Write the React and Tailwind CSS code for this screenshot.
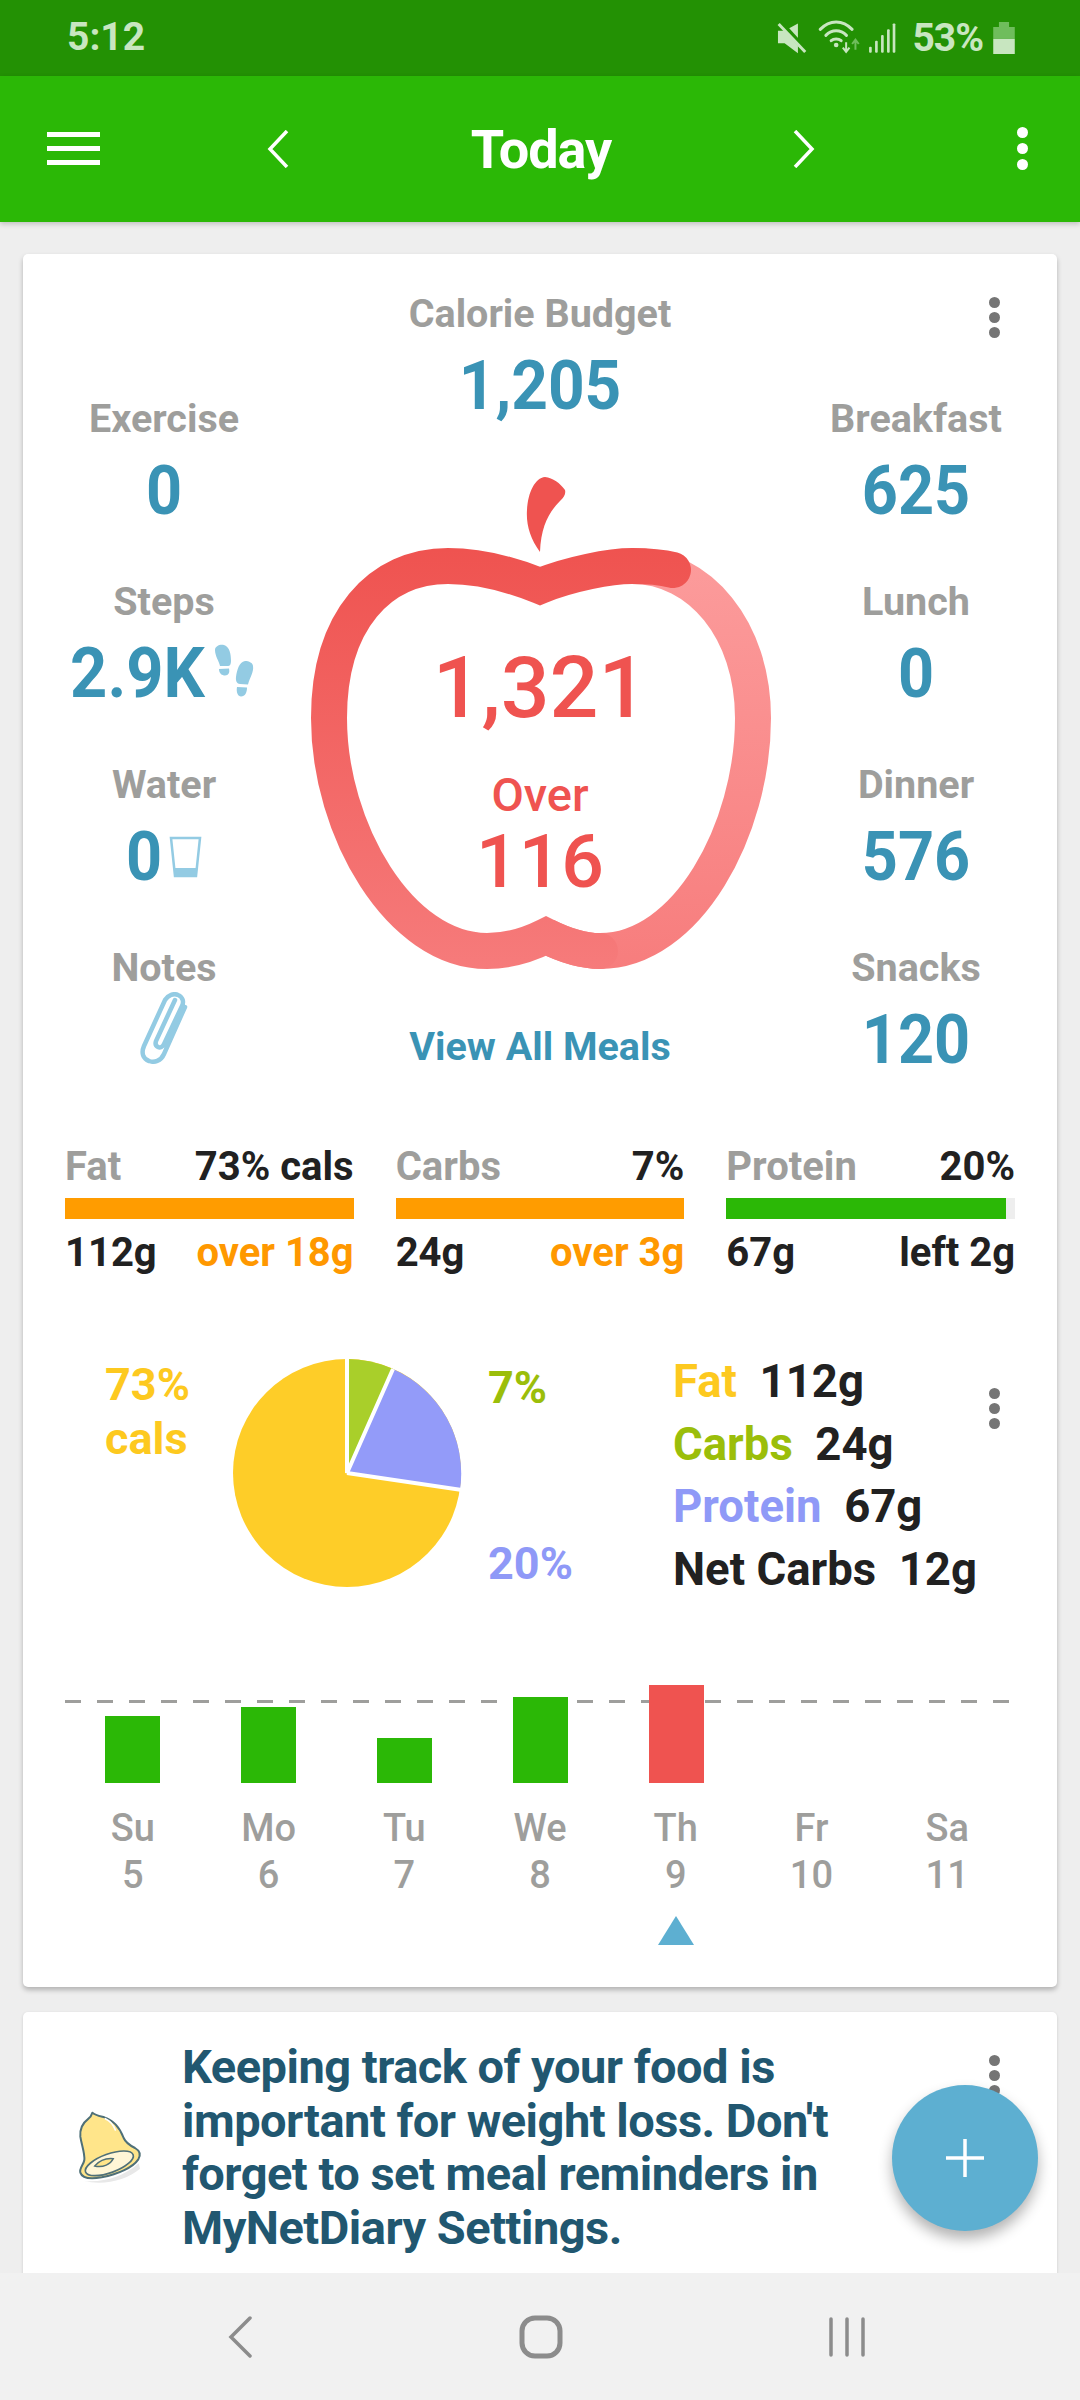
import React from 'react'

const Kebab = ({ className = '' }) => (
  <div className={`flex flex-col gap-[4px] ${className}`}>
    <span className="w-[11px] h-[11px] rounded-full bg-[#757575]" />
    <span className="w-[11px] h-[11px] rounded-full bg-[#757575]" />
    <span className="w-[11px] h-[11px] rounded-full bg-[#757575]" />
  </div>
)

const StatusIcons = () => (
  <svg width="133" height="60" viewBox="0 0 400 180" className="block mt-[4px]">
    {/* mute */}
    <path d="M30 62h20L90 40v90L50 100H30z" fill="#c8e6c0" />
    <path d="M36 36l80 88" stroke="#239104" strokeWidth="16" />
    <path d="M32 42l80 84" stroke="#c8e6c0" strokeWidth="9" />
    {/* wifi */}
    <g fill="none" stroke="#c8e6c0" strokeWidth="9" strokeLinecap="round">
      <path d="M157 58c28-30 68-30 96 0" />
      <path d="M174 76c18-18 44-18 62 0" />
      <path d="M190 92c8-7 22-7 30 0" />
    </g>
    <circle cx="205" cy="105" r="7" fill="#c8e6c0" />
    <path d="M235 97v28m-10-12l10 13 10-13" stroke="#c8e6c0" strokeWidth="6" fill="none" />
    <path d="M263 119V90m-10 12l10-13 10 13" stroke="#6fbd5c" strokeWidth="6" fill="none" />
    {/* signal */}
    <g fill="#c8e6c0">
      <rect x="304" y="110" width="8" height="18" rx="3" />
      <rect x="322" y="92" width="8" height="36" rx="3" />
      <rect x="340" y="75" width="8" height="53" rx="3" />
      <rect x="358" y="58" width="8" height="70" rx="3" />
      <rect x="375" y="40" width="8" height="88" rx="3" />
    </g>
  </svg>
)

const Battery = () => (
  <svg width="22" height="32" viewBox="668 35 64 95" className="block">
    <path d="M685 35h30v15h17v35h-64V50h17z" fill="#6fbd5c" />
    <path d="M668 85h64v45h-64z" fill="#c8e6c0" />
  </svg>
)

const Header = () => (
  <header className="h-[146px] shrink-0 bg-[#2bb806] flex items-center pl-[47px] pr-[52px] relative z-10 shadow-[0_2px_5px_rgba(0,0,0,0.2)]">
    <div className="w-[53px] flex flex-col gap-[9px] -mt-[2px]">
      <span className="h-[5px] bg-white" />
      <span className="h-[5px] bg-white" />
      <span className="h-[5px] bg-white" />
    </div>
    <div className="flex-1 flex items-center justify-between pl-[167px] pr-[202px]">
      <svg width="22" height="38" viewBox="0 0 22 38" fill="none" stroke="white" strokeWidth="3.5"><path d="M20 1L3 19l17 18" /></svg>
      <span className="text-[54px] leading-none font-bold text-white tracking-[-1px] mt-[1px]">Today</span>
      <svg width="22" height="38" viewBox="0 0 22 38" fill="none" stroke="white" strokeWidth="3.5"><path d="M2 1l17 18L2 37" /></svg>
    </div>
    <div className="flex flex-col gap-[5px] -mt-[2px]">
      <span className="w-[11px] h-[11px] rounded-full bg-white" />
      <span className="w-[11px] h-[11px] rounded-full bg-white" />
      <span className="w-[11px] h-[11px] rounded-full bg-white" />
    </div>
  </header>
)

const Stat = ({ label, value, icon, valueClass = 'text-[63px]' }) => (
  <div className="h-[183px] flex flex-col items-center">
    <div className="text-[39.5px] leading-[46px] font-bold text-[#9e9e9c]">{label}</div>
    <div className="flex items-center gap-[7px] h-[80px] mt-[8px]">
      {value && <span className={`${valueClass} leading-none font-bold text-[#3a93b5] scale-y-[1.08]`}>{value}</span>}
      {icon}
    </div>
  </div>
)

const Steps = () => (
  <svg width="44" height="58" viewBox="0 0 44 58" fill="#93cbe3" className="mr-[2px]">
    <path d="M3 6c0-4 5-6 9-5 6 2 7 10 7 16 0 3-1 5-3 5H8C7 17 3 12 3 6z" />
    <path d="M7 25l10-.5c1 4-.5 7-4 7-3 0-6-2-6-6.500z" />
    <path d="M41 22c0-3-4-5-8-5-6 1-8 9-9 16-.5 4 1 7 4 7l8 .5C38 33 42 28 41 22z" />
    <path d="M25 43l10 .5c0 5-2 9-6 9-3 0-5-4-4-9.500z" />
  </svg>
)

const Glass = () => (
  <svg width="33" height="42" viewBox="0 0 33 42" className="mt-[2px]">
    <path d="M2 2h29l-4 38H6z" fill="none" stroke="#93cbe3" strokeWidth="2.500" />
    <path d="M5 32h23l-1 8H6z" fill="#93cbe3" />
  </svg>
)

const Clip = () => (
  <svg width="48" height="72" viewBox="0 0 48 72" fill="none" stroke="#93cbe3" strokeWidth="4.500" strokeLinecap="round" className="-translate-y-[11px]">
    <path d="M45 15L24 62c-3 7-10 9-15 7-6-2-8-8-5-15L25 8c3-5 9-7 13-5 5 2 6 7 4 11L24 52c-1 3-4 4-6 3s-3-3-2-6l19-41" />
  </svg>
)

const Bell = () => (
  <svg width="100" height="110" viewBox="0 0 300 330" className="shrink-0 mt-[50px]">
    <path d="M70 272c50 8 120-10 166-52l4 16c-40 34-110 52-170 36z" fill="#e8e8e8" />
    <path d="M97 68c8 8 20 10 36 14 26 8 46 30 58 62 6 14 18 22 34 30 14 8 18 20 10 34-16 24-60 44-110 54-34 6-58 4-64-14-4-12 10-24 12-38 2-20-8-44-12-70-2-24 6-40 22-52 8-6 12-12 14-20z" fill="#ffe58a" stroke="#4f7078" strokeWidth="6" strokeLinejoin="round" />
    <ellipse cx="148" cy="220" rx="76" ry="28" transform="rotate(-20 148 220)" fill="#fff6d6" stroke="#4f7078" strokeWidth="5" />
    <path d="M104 228c14-16 36-24 56-22-8 16-30 28-56 22z" fill="#ffe58a" stroke="#4f7078" strokeWidth="4" />
    <path d="M136 86c14 6 24 18 30 34" stroke="white" strokeWidth="5" fill="none" strokeLinecap="round" />
  </svg>
)

const Apple = () => (
  <div className="relative w-[470px] h-[500px] shrink-0">
    <svg width="470" height="500" viewBox="305 470 470 500" className="absolute inset-0">
      <defs>
        <linearGradient id="appleDark" gradientUnits="userSpaceOnUse" x1="0" y1="550" x2="0" y2="970">
          <stop offset="0" stopColor="#ef5350" />
          <stop offset="1" stopColor="#f67b7b" />
        </linearGradient>
        <linearGradient id="appleLight" gradientUnits="userSpaceOnUse" x1="0" y1="550" x2="0" y2="970">
          <stop offset="0" stopColor="#fc9c9c" />
          <stop offset="1" stopColor="#f77d7d" />
        </linearGradient>
      </defs>
      <path d="M540 552C530 538 526 524 527 510C528 492 535 478 545 477C553 478 560 483 565 490C566 494 564 497 560 501C550 511 541 525 540 552z" fill="#ef5350" />
      <path d="M632 566C700 566 753 630 753 718C753 830 687 951 600 951C580 951 562 944 546 936" fill="none" stroke="url(#appleLight)" strokeWidth="36" strokeLinejoin="miter" />
      <path d="M600 951C580 951 562 944 546 936C530 944 510 951 487 951C400 951 329 830 329 718C329 620 380 566 448 566C480 566 510 574 540 586C570 574 610 566 632 566C650 566 665 568 673 570" fill="none" stroke="url(#appleDark)" strokeWidth="36" strokeLinecap="round" strokeLinejoin="miter" />
    </svg>
    <div className="absolute inset-x-0 top-[173px] flex flex-col items-center text-[#ef5350] font-medium">
      <span className="text-[86px] leading-[89px]">1,321</span>
      <span className="text-[47px] leading-[50px] mt-[38px]">Over</span>
      <span className="text-[75px] leading-[78px] mt-[2px]">116</span>
    </div>
  </div>
)

const macros = [
  { name: 'Fat', pct: '73% cals', grams: '112g', note: 'over 18g', noteClass: 'text-[#ff9800]', barClass: 'bg-[#ff9c00] w-full' },
  { name: 'Carbs', pct: '7%', grams: '24g', note: 'over 3g', noteClass: 'text-[#ff9800]', barClass: 'bg-[#ff9c00] w-full' },
  { name: 'Protein', pct: '20%', grams: '67g', note: 'left 2g', noteClass: 'text-[#212121]', barClass: 'bg-[#2bb806] w-[97%]' },
]

const days = [
  { d: 'Su', n: '5', barClass: 'h-[67px] bg-[#2bb806]' },
  { d: 'Mo', n: '6', barClass: 'h-[76px] bg-[#2bb806]' },
  { d: 'Tu', n: '7', barClass: 'h-[45px] bg-[#2bb806]' },
  { d: 'We', n: '8', barClass: 'h-[86px] bg-[#2bb806]' },
  { d: 'Th', n: '9', barClass: 'h-[98px] bg-[#ef5350]', current: true },
  { d: 'Fr', n: '10' },
  { d: 'Sa', n: '11' },
]

export default function App() {
  return (
    <div className="relative w-[1080px] h-[2400px] overflow-hidden flex flex-col bg-[#eeeeee] font-['Roboto',sans-serif]">
      <div className="h-[76px] shrink-0 bg-[#239104] flex items-center pl-[67px] pr-[65px] text-[#c8e6c0] text-[39px] font-bold">
        <span className="flex-1 -mt-[1px]">5:12</span>
        <StatusIcons />
        <span className="ml-[11px] mr-[10px] tracking-[-1px]">53%</span>
        <Battery />
      </div>
      <Header />

      <main className="flex-1 overflow-hidden px-[23px] pt-[32px] flex flex-col gap-[25px]">
        <section className="shrink-0 h-[1733px] bg-white rounded-[5px] shadow-[0_3px_5px_rgba(0,0,0,0.25)]">
          {/* top: apple and stats */}
          <div className="relative grid grid-cols-[282px_470px_282px] h-[868px]">
            <Kebab className="absolute right-[57px] top-[43px]" />
            <div className="pt-[142px]">
              <Stat label="Exercise" value="0" />
              <Stat label="Steps" value="2.9K" icon={<Steps />} valueClass="text-[65px]" />
              <Stat label="Water" value="0" icon={<Glass />} />
              <Stat label="Notes" icon={<Clip />} />
            </div>
            <div className="flex flex-col items-center pt-[37px]">
              <div className="text-[39.5px] leading-[46px] font-bold text-[#9e9e9c]">Calorie Budget</div>
              <div className="text-[64px] leading-[80px] font-bold text-[#3a93b5] mt-[9px] scale-y-[1.08]">1,205</div>
              <div className="pt-[44px]"><Apple /></div>
              <div className="text-[39.5px] leading-[46px] font-bold text-[#3a93b5] mt-[54px]">View All Meals</div>
            </div>
            <div className="pt-[142px]">
              <Stat label="Breakfast" value="625" />
              <Stat label="Lunch" value="0" />
              <Stat label="Dinner" value="576" />
              <Stat label="Snacks" value="120" />
            </div>
          </div>

          {/* macro bars */}
          <div className="grid grid-cols-3 gap-[42px] px-[42px] pt-[22px] text-[40px] font-bold leading-[46px]">
            {macros.map((m) => (
              <div key={m.name}>
                <div className="flex justify-between">
                  <span className="text-[#9e9e9c]">{m.name}</span>
                  <span className="text-[#212121]">{m.pct}</span>
                </div>
                <div className="h-[21px] mt-[8px] bg-[#eeeeee]">
                  <div className={`h-full ${m.barClass}`} />
                </div>
                <div className="flex justify-between mt-[11px]">
                  <span className="text-[#212121]">{m.grams}</span>
                  <span className={m.noteClass}>{m.note}</span>
                </div>
              </div>
            ))}
          </div>

          {/* pie and legend */}
          <div className="relative flex mt-[82px] h-[236px] pl-[82px] text-[45px] font-bold">
            <div className="w-[127px] text-[#fdc91f] leading-[54px]">
              <div>73%</div>
              <div>cals</div>
            </div>
            <svg width="230" height="230" viewBox="-115 -115 230 230" className="shrink-0">
              <circle r="114" fill="#fecd28" />
              <path d="M0 0L0-114A114 114 0 0 1 46-104z" fill="#a9cf2a" />
              <path d="M0 0L46-104A114 114 0 0 1 113 17z" fill="#939bf9" />
              <path d="M0-116L0 0L46-104M0 0L115 17" fill="none" stroke="white" strokeWidth="4" />
            </svg>
            <div className="w-[211px] pl-[26px] flex flex-col justify-between py-[3px] leading-[54px]">
              <div className="text-[#9bbe0a]">7%</div>
              <div className="text-[#8f99f7]">20%</div>
            </div>
            <div className="flex flex-col leading-[62.5px] -mt-[7px] text-[#212121] whitespace-pre text-[45.5px]">
              <div><span className="text-[#fdc91f]">Fat</span>  112g</div>
              <div><span className="text-[#9bbe0a]">Carbs</span>  24g</div>
              <div><span className="text-[#8f99f7]">Protein</span>  67g</div>
              <div>Net Carbs  12g</div>
            </div>
            <Kebab className="absolute right-[57px] top-[30px]" />
          </div>

          {/* weekly bars */}
          <div className="relative mx-[41px] mt-[91px] h-[98px] grid grid-cols-7 items-end">
            <div className="absolute left-[1px] top-[15px] w-[945px] h-[3px] bg-[repeating-linear-gradient(90deg,#9e9e9c_0_16px,transparent_16px_32px)]" />
            {days.map((day) => (
              <div key={day.d} className="relative flex justify-center">
                {day.barClass && <div className={`w-[55px] ${day.barClass}`} />}
              </div>
            ))}
          </div>
          <div className="mx-[42px] mt-[22px] grid grid-cols-7 text-[38px] font-medium leading-[47px] text-[#9e9e9c]">
            {days.map((day) => (
              <div key={day.d} className="flex flex-col items-center">
                <span>{day.d}</span>
                <span>{day.n}</span>
                {day.current && <div className="mt-[17px] w-0 h-0 border-x-[18px] border-x-transparent border-b-[29px] border-b-[#5dafd1]" />}
              </div>
            ))}
          </div>
        </section>

        {/* reminder card */}
        <section className="shrink-0 h-[320px] bg-white rounded-[5px] relative flex pl-[37px] pt-[28px] shadow-[0_1px_3px_rgba(0,0,0,0.15)]">
          <Bell />
          <p className="ml-[22px] w-[690px] text-[47px] leading-[53.5px] font-bold text-[#215770] tracking-[-0.5px]">
            Keeping track of your food is important for weight loss. Don't forget to set meal reminders in MyNetDiary Settings.
          </p>
          <Kebab className="absolute right-[57px] top-[43px]" />
        </section>
      </main>

      <button className="absolute left-[892px] top-[2085px] z-20 w-[146px] h-[146px] rounded-full bg-[#5dafd1] flex items-center justify-center shadow-[0_8px_14px_rgba(0,0,0,0.3)]">
        <svg width="38" height="38" viewBox="0 0 38 38" stroke="white" strokeWidth="3.500"><path d="M19 0v38M0 19h38" /></svg>
      </button>

      <nav className="absolute bottom-0 inset-x-0 z-10 h-[127px] bg-[#f1f1f1] flex items-center pl-[226px] pr-[214px] justify-between">
        <svg width="28" height="42" viewBox="0 0 28 42" fill="none" stroke="#8c8c8c" strokeWidth="3.500" strokeLinecap="round"><path d="M24 2L5 21l19 19" /></svg>
        <svg width="44" height="44" viewBox="0 0 44 44" fill="none" stroke="#8c8c8c" strokeWidth="5"><rect x="3" y="3" width="38" height="38" rx="13" /></svg>
        <svg width="38" height="40" viewBox="0 0 38 40" stroke="#8c8c8c" strokeWidth="3.500" strokeLinecap="round"><path d="M3 2v36M19 2v36M35 2v36" /></svg>
      </nav>
    </div>
  )
}
